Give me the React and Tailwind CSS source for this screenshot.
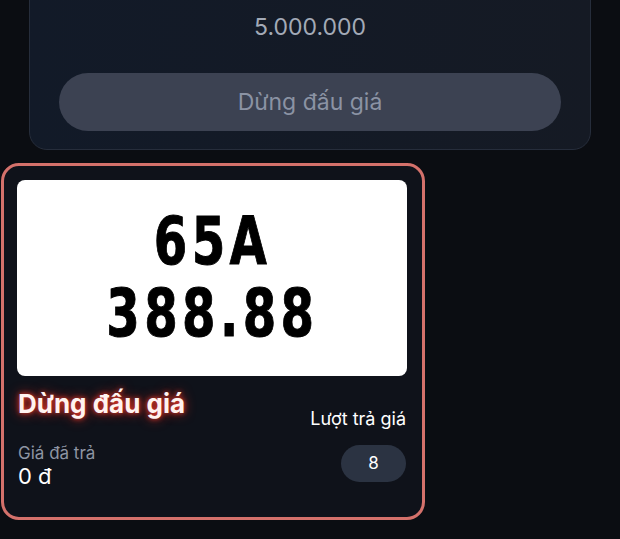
export default function App() {
  return (
    <div className="min-h-screen w-[620px] h-[539px] overflow-hidden bg-[#0b0d12] relative" style={{ fontFamily: 'Inter, "Noto Sans", sans-serif' }}>
      <div className="px-[29px] pt-0 w-[620px] -mt-[41px]">
        <div className="rounded-b-[18px] border border-[#262d3b] bg-gradient-to-r from-[#121a28] to-[#151a24] px-[29px] pt-[53px] pb-[18px]">
          <div className="text-center text-[23px] leading-[28px] text-[#a3aab7]">5.000.000</div>
          <button className="mt-[32px] w-full h-[58px] rounded-full bg-[#3c4252] text-[23px] text-[#8b93a4]">
            Dừng đấu giá
          </button>
        </div>
      </div>

      <div className="mt-[13px] ml-[1px] w-[424px] h-[357px] rounded-[18px] border-[3px] border-[#d4716b] bg-[#0f121a] px-[13px] pt-[14px]">
        <div className="h-[196px] w-[390px] rounded-[8px] bg-white flex flex-col items-center justify-center text-black font-bold [-webkit-text-stroke:1px_black]"
          style={{ fontFamily: '"DejaVu Sans", sans-serif' }}>
          <div className="text-[66px] leading-[72px] tracking-[6px] scale-x-[0.73]">65A</div>
          <div className="text-[66px] leading-[72px] tracking-[6px] scale-x-[0.73]">388.88</div>
        </div>

        <div className="flex justify-between items-end mt-[14px] pl-[1px] pr-[3px]">
          <div>
            <div className="text-[26px] leading-[28px] font-bold text-[#fff3f0] [text-shadow:0_0_5px_#ef3b2c,0_0_12px_#c0261b]">
              Dừng đấu giá
            </div>
            <div className="mt-[25px] text-[17px] leading-[20px] text-[#8e95a3]">Giá đã trả</div>
            <div className="text-[22px] leading-[26px] text-white">0 đ</div>
          </div>
          <div className="flex flex-col items-end pb-[7px]">
            <div className="text-[18px] leading-[20px] text-white">Lượt trả giá</div>
            <div className="mt-[16px] w-[65px] h-[37px] rounded-full bg-[#2b3342] flex items-center justify-center text-[17px] text-white">8</div>
          </div>
        </div>
      </div>
    </div>
  )
}
